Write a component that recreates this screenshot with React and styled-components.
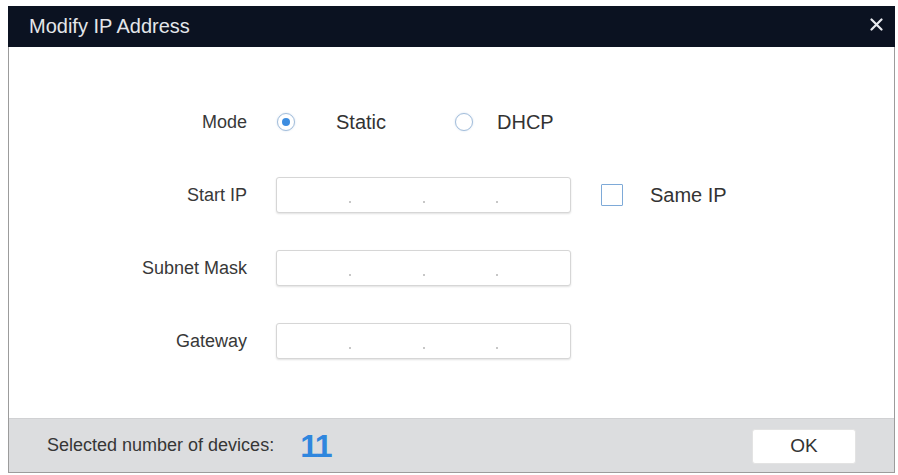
import React from 'react'
import styled, { createGlobalStyle } from 'styled-components'

const GlobalStyle = createGlobalStyle`
  html, body {
    margin: 0;
    padding: 0;
    background: #ffffff;
    font-family: "Liberation Sans", Arial, sans-serif;
  }
`

const Dialog = styled.div`
  box-sizing: border-box;
  margin: 6px 0 0 8px;
  width: 887px;
  height: 467px;
  border: 1px solid #9c9c9c;
  border-top: none;
  display: flex;
  flex-direction: column;
  background: #ffffff;
`

const TitleBar = styled.div`
  height: 41px;
  background: #0b1221;
  display: flex;
  align-items: center;
  justify-content: space-between;
  padding: 0 12px 0 21px;
  margin: 0 -1px;
  color: #e4e6ea;
  font-size: 20px;
`

const CloseButton = styled.button`
  background: none;
  border: none;
  padding: 0;
  width: 13px;
  height: 13px;
  display: flex;
  cursor: pointer;
  margin-top: -4px;
`

const Body = styled.div`
  flex: 1;
  padding-top: 57px;
  display: grid;
  grid-template-columns: 238px 295px auto;
  grid-auto-rows: 36px;
  column-gap: 29px;
  row-gap: 37px;
  align-content: start;
  align-items: center;
`

const Label = styled.div`
  text-align: right;
  font-size: 18px;
  color: #383838;
`

const RadioGroup = styled.div`
  grid-column: 2 / 4;
  display: flex;
  align-items: center;
  padding-left: 1px;
`

const RadioOption = styled.label`
  display: flex;
  align-items: center;
  width: ${p => p.$width}px;
  gap: ${p => p.$gap}px;
  font-size: 20px;
  color: #333333;
`

const RadioCircle = styled.span`
  box-sizing: border-box;
  width: 18px;
  height: 18px;
  border-radius: 50%;
  border: 1.5px solid #a3bedb;
  display: flex;
  align-items: center;
  justify-content: center;
  background: #ffffff;
  box-shadow: 0 0 2px rgba(120, 160, 210, 0.35);

  &::after {
    content: '';
    width: 8px;
    height: 8px;
    border-radius: 50%;
    background: #3d8de0;
    display: ${p => (p.$checked ? 'block' : 'none')};
  }
`

const IpBox = styled.div`
  box-sizing: border-box;
  height: 36px;
  border: 1px solid #d6d6d6;
  border-radius: 3px;
  box-shadow: 0 1px 2px rgba(0, 0, 0, 0.12);
  display: flex;
  align-items: flex-end;
  padding-bottom: 7px;
  background: #ffffff;
`

const Segment = styled.input`
  flex: 1;
  min-width: 0;
  border: none;
  outline: none;
  background: transparent;
  text-align: center;
  font-family: inherit;
  font-size: 14px;
  padding: 0;
`

const Dot = styled.span`
  width: 2px;
  height: 2px;
  border-radius: 50%;
  background: #b4b4b4;
  margin-bottom: 2px;
`

const CheckRow = styled.label`
  display: flex;
  align-items: center;
  gap: 27px;
  margin-left: 1px;
  font-size: 20px;
  color: #333333;
`

const CheckBox = styled.span`
  box-sizing: border-box;
  width: 22px;
  height: 22px;
  border: 1.5px solid #7eaad8;
  border-radius: 1px;
  background: #ffffff;
`

const Footer = styled.div`
  height: 53px;
  background: #dcdddf;
  border-top: 1px solid #d0d1d3;
  display: flex;
  align-items: center;
  padding: 0 38px 0 38px;
`

const FooterText = styled.span`
  font-size: 18px;
  color: #363636;
`

const Count = styled.span`
  margin-left: 26px;
  font-size: 32px;
  font-weight: bold;
  color: #2f86de;
  letter-spacing: -1.5px;
  line-height: 1;
`

const OkButton = styled.button`
  margin-left: auto;
  width: 104px;
  height: 35px;
  background: #ffffff;
  border: 1px solid #e3e3e3;
  border-radius: 3px;
  font-family: inherit;
  font-size: 19px;
  color: #333333;
  margin-top: 1px;
  cursor: pointer;
`

const IpInput = () => (
  <IpBox>
    <Segment />
    <Dot />
    <Segment />
    <Dot />
    <Segment />
    <Dot />
    <Segment />
  </IpBox>
)

const App = () => {
  const [mode, setMode] = React.useState('static')

  return (
    <>
      <GlobalStyle />
      <Dialog>
        <TitleBar>
          <span>Modify IP Address</span>
          <CloseButton type="button">
            <svg width="13" height="13" viewBox="0 0 13 13">
              <path d="M1.5 1.5 L11.5 11.5 M11.5 1.5 L1.5 11.5" stroke="#e8eaee" strokeWidth="2.2" strokeLinecap="round" />
            </svg>
          </CloseButton>
        </TitleBar>
        <Body>
          <Label>Mode</Label>
          <RadioGroup>
            <RadioOption $width={178} $gap={41} onClick={() => setMode('static')}>
              <RadioCircle $checked={mode === 'static'} />
              Static
            </RadioOption>
            <RadioOption $width={140} $gap={24} onClick={() => setMode('dhcp')}>
              <RadioCircle $checked={mode === 'dhcp'} />
              DHCP
            </RadioOption>
          </RadioGroup>

          <Label>Start IP</Label>
          <IpInput />
          <CheckRow>
            <CheckBox />
            Same IP
          </CheckRow>

          <Label>Subnet Mask</Label>
          <IpInput />
          <span />

          <Label>Gateway</Label>
          <IpInput />
          <span />
        </Body>
        <Footer>
          <FooterText>Selected number of devices:</FooterText>
          <Count>11</Count>
          <OkButton type="button">OK</OkButton>
        </Footer>
      </Dialog>
    </>
  )
}

export default App
